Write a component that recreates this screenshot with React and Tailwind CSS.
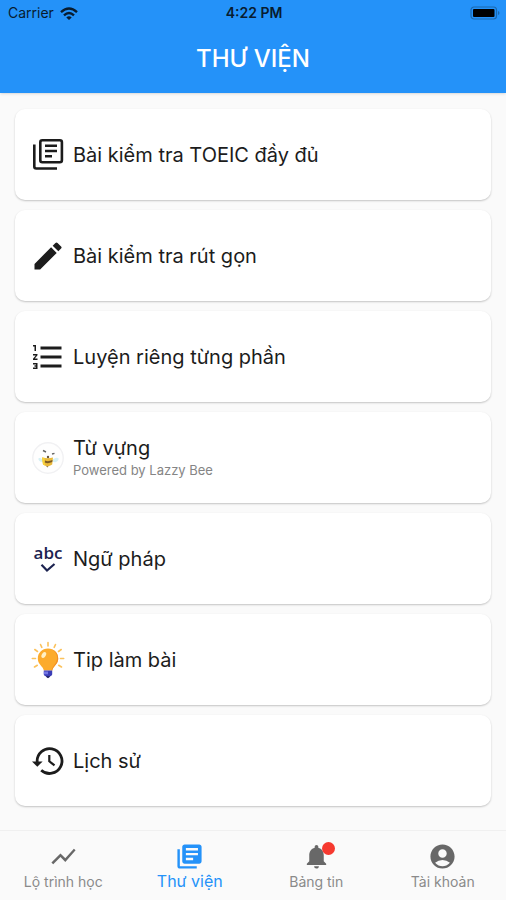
import React from 'react';
import {
  MdLibraryBooks,
  MdEdit,
  MdFormatListNumbered,
  MdShowChart,
  MdNotifications,
  MdAccountCircle,
} from 'react-icons/md';

const TestsIcon = () => (
  <svg viewBox="0 0 36 36" className="w-9 h-9" fill="none" stroke="currentColor" strokeWidth="2.600" aria-hidden="true">
    <rect x="10.300" y="3.300" width="21.600" height="22" rx="2" />
    <path d="M4.300 7.500V29.500Q4.300 31.500 6.300 31.500H27" />
    <path d="M15 8.800H27M15 14H27M15 19.200H22" strokeWidth="2.400" />
  </svg>
);

const HistoryIcon = () => (
  <svg viewBox="0 0 36 36" className="w-9 h-9" fill="none" stroke="currentColor" aria-hidden="true">
    <path d="M7.200 19A12.400 12.400 0 1 1 11.200 27.200" strokeWidth="2.800" />
    <path d="M2 18.500H12.600L7.300 23.800Z" fill="currentColor" stroke="none" />
    <path d="M19.300 12V18.300L24.500 22.300" strokeWidth="2.200" />
  </svg>
);

const BeeIcon = () => (
  <svg viewBox="0 0 32 32" className="w-8 h-8" aria-hidden="true">
    <circle cx="16" cy="16" r="15.2" fill="#fefefe" stroke="#f1f1f3" strokeWidth="1.4" />
    <path d="M10.500 17.500C7 15 5.500 16 7 18.500C8 20 10 20 11 19.500Z" fill="#d5f0f5" />
    <path d="M20.500 17.500C25 14.500 28 15.500 26 18.500C24.500 20.500 22 20.500 20.500 19.800Z" fill="#d5f0f5" />
    <path d="M11 8.500L14 10M20 12L22.500 11.300" fill="none" stroke="#666" strokeWidth="1.400" />
    <path d="M10 15.500Q16 17 21 15.500L20.200 22.500Q15.500 26 11 22.500Z" fill="#e9b93a" />
    <path d="M10 15.500L12.500 15.800L13 23.500L11 22.500Z" fill="#f8d33c" />
    <path d="M13 18.500Q16 20 20.500 18L20.200 20Q16 22 12.800 20.500Z" fill="#7a5a26" />
    <circle cx="16" cy="15" r="1.200" fill="#675641" />
    <path d="M14 24L16.500 24.200L15.500 25.500Z" fill="#8b7040" />
  </svg>
);

const GrammarIcon = () => (
  <span className="flex flex-col items-center gap-0.5 text-[#1c2350]" aria-hidden="true">
    <span className="font-['Open_Sans',sans-serif] text-[17px] leading-4 font-semibold">abc</span>
    <svg viewBox="0 0 16 10" className="w-4 h-[10px]">
      <path d="M1.500 1.800L7 7.500L14.500 1" fill="none" stroke="currentColor" strokeWidth="2.200" />
    </svg>
  </span>
);

const BulbIcon = () => (
  <svg viewBox="0 0 34 38" className="w-[34px] h-[38px]" aria-hidden="true">
    <g stroke="#fbc25c" strokeWidth="1.600" strokeLinecap="round">
      <path d="M17 1.500V5M9.500 3.500L10.800 6.300M24.500 3.500L23.200 6.300M3.800 8.500L6.500 10.500M30.200 8.500L27.500 10.500M1.300 17.500H4.500M32.700 17.500H29.500M3.500 26L6.300 24.300M30.500 26L27.700 24.300" />
    </g>
    <path d="M17 7.500C11 7.500 6.800 12 6.800 17.500C6.800 22 9.800 24.200 11.500 26.500Q12.500 28 12.800 29.500H21.200Q21.500 28 22.500 26.500C24.200 24.200 27.200 22 27.200 17.500C27.200 12 23 7.500 17 7.500Z" fill="#fcab2c" />
    <path d="M21 8.500C24.500 10.200 26.500 14 26 18C25.500 22.500 22 24 20.500 29.500H21.200Q21.500 28 22.500 26.500C24.200 24.200 27.200 22 27.200 17.500C27.200 13.200 24.800 9.800 21 8.500Z" fill="#f18f25" />
    <ellipse cx="12.800" cy="14" rx="2" ry="3.200" transform="rotate(30 12.800 14)" fill="#fff0c4" />
    <path d="M12.800 29.500H21.200V33.500Q20.500 35 19.300 35.200Q17 38.500 14.700 35.200Q13.300 35 12.800 33.500Z" fill="#3b3db7" />
    <path d="M12.800 30.500H17V33.300H12.800Z" fill="#7376e5" />
    <path d="M15 35.300H19L17 37.300Z" fill="#202350" />
  </svg>
);

const WifiIcon = () => (
  <svg viewBox="0 0 18 13" className="w-[18px] h-[13px]" aria-hidden="true">
    <g fill="none" stroke="#081c30" strokeWidth="2.400">
      <path d="M1 5.200Q9 -2 17 5.200" />
      <path d="M4 8.300Q9 3.800 14 8.300" />
    </g>
    <path d="M6.300 10.500Q9 8 11.700 10.500L9 13Z" fill="#081c30" />
  </svg>
);

const BatteryIcon = () => (
  <svg viewBox="0 0 30 14" className="w-[30px] h-[14px]" aria-hidden="true">
    <rect x="1" y="1" width="25.500" height="12" rx="3" fill="none" stroke="#1b68ae" strokeWidth="1.200" />
    <rect x="3" y="3" width="21.500" height="8" rx="1" fill="#000" />
    <path d="M28 5V9Q29.500 8.500 29.500 7Q29.500 5.500 28 5Z" fill="#1b68ae" />
  </svg>
);

const items = [
  { title: 'Bài kiểm tra TOEIC đầy đủ', icon: <TestsIcon /> },
  { title: 'Bài kiểm tra rút gọn', icon: <MdEdit className="w-9 h-9" /> },
  { title: 'Luyện riêng từng phần', icon: <MdFormatListNumbered className="w-9 h-9" /> },
  { title: 'Từ vựng', subtitle: 'Powered by Lazzy Bee', icon: <BeeIcon /> },
  { title: 'Ngữ pháp', icon: <GrammarIcon /> },
  { title: 'Tip làm bài', icon: <BulbIcon /> },
  { title: 'Lịch sử', icon: <HistoryIcon /> },
];

const tabs = [
  { label: 'Lộ trình học', Icon: MdShowChart },
  { label: 'Thư viện', Icon: MdLibraryBooks, active: true },
  { label: 'Bảng tin', Icon: MdNotifications, badge: true },
  { label: 'Tài khoản', Icon: MdAccountCircle },
];

const StatusBar = () => (
  <div className="grid grid-cols-3 items-center h-[26px] pl-2 pr-1.5 text-[#081c30]">
    <div className="flex items-center gap-1.5 text-sm">
      <span>Carrier</span>
      <WifiIcon />
    </div>
    <span className="text-center text-sm font-semibold">4:22 PM</span>
    <div className="flex justify-end">
      <BatteryIcon />
    </div>
  </div>
);

const App = () => {
  return (
    <div className="min-h-screen flex flex-col bg-[#fafafa] font-[Inter,sans-serif]">
      <header className="bg-[#2492f9] shadow-sm">
        <StatusBar />
        <h1 className="pt-[18px] pb-[19px] text-center text-2xl leading-[30px] font-medium text-white">THƯ VIỆN</h1>
      </header>

      <main className="flex-1 flex flex-col gap-[10px] px-[15px] pt-4 pb-[22px]">
        {items.map((item) => (
          <button
            key={item.title}
            type="button"
            className="flex items-center gap-[7px] w-full h-[91px] px-[15px] rounded-[10px] bg-white text-left text-[#1c1c1c] shadow-[0_1px_2px_rgba(0,0,0,0.22)]"
          >
            <span className="flex items-center justify-center w-9 shrink-0">{item.icon}</span>
            <span className="flex flex-col">
              <span className="text-xl leading-6">{item.title}</span>
              {item.subtitle && <span className="text-[13px] leading-5 text-[#858585]">{item.subtitle}</span>}
            </span>
          </button>
        ))}
      </main>

      <nav className="grid grid-cols-4 h-[70px] border-t border-[#f0f0f0]">
        {tabs.map(({ label, Icon, active, badge }) => (
          <a
            key={label}
            href="#"
            className={`flex flex-col items-center pt-[11px] ${active ? 'text-[#2492f9]' : 'text-[#686868]'}`}
          >
            <span className="relative">
              <Icon className="w-[29px] h-[29px]" />
              {badge && <span className="absolute top-0 -right-1 w-[13px] h-[13px] rounded-full bg-[#f6392f]" />}
            </span>
            <span className={active ? 'text-base leading-5' : 'text-sm leading-[22px] text-[#8a8a8a]'}>{label}</span>
          </a>
        ))}
      </nav>
    </div>
  );
};

export default App;
